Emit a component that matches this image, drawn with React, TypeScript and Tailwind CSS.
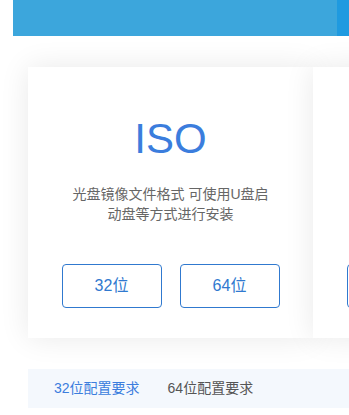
import React from 'react';

const font = { fontFamily: '"Liberation Sans", "Noto Sans CJK SC", sans-serif' };

const Card: React.FC = () => {
  return (
    <div className="w-[285px] h-[271px] shrink-0 bg-white shadow-[0_0_28px_rgba(0,0,0,0.09)] flex flex-col items-center pt-[51px]">
      <div className="text-[42px] leading-none text-[#3b7ddd]">ISO</div>
      <p className="mt-[24px] w-[200px] text-center text-[14px] leading-[20px] text-[#666]">
        光盘镜像文件格式 可使用U盘启动盘等方式进行安装
      </p>
      <div className="mt-[40px] flex gap-[18px]">
        <button className="w-[100px] h-[44px] rounded-[4px] border border-[#3079cf] text-[16px] text-[#3079cf]">
          32位
        </button>
        <button className="w-[100px] h-[44px] rounded-[4px] border border-[#3079cf] text-[16px] text-[#3079cf]">
          64位
        </button>
      </div>
    </div>
  );
};

const App: React.FC = () => {
  return (
    <div className="w-[349px] h-[415px] overflow-hidden bg-white" style={font}>
      <div className="ml-[13px] h-[36px] flex">
        <div className="flex-1 bg-[#3ca6dc]" />
        <div className="w-[12px] bg-[#1f9ae0]" />
      </div>
      <div className="pl-[28px] pt-[31px] flex">
        <Card />
        <Card />
      </div>
      <div className="mt-[31px] ml-[28px] h-[39px] bg-[#f4f8fd] flex items-center pl-[26px] gap-[28px] text-[14px]">
        <span className="text-[#3b7ddd]">32位配置要求</span>
        <span className="text-[#555]">64位配置要求</span>
      </div>
    </div>
  );
};

export default App;
